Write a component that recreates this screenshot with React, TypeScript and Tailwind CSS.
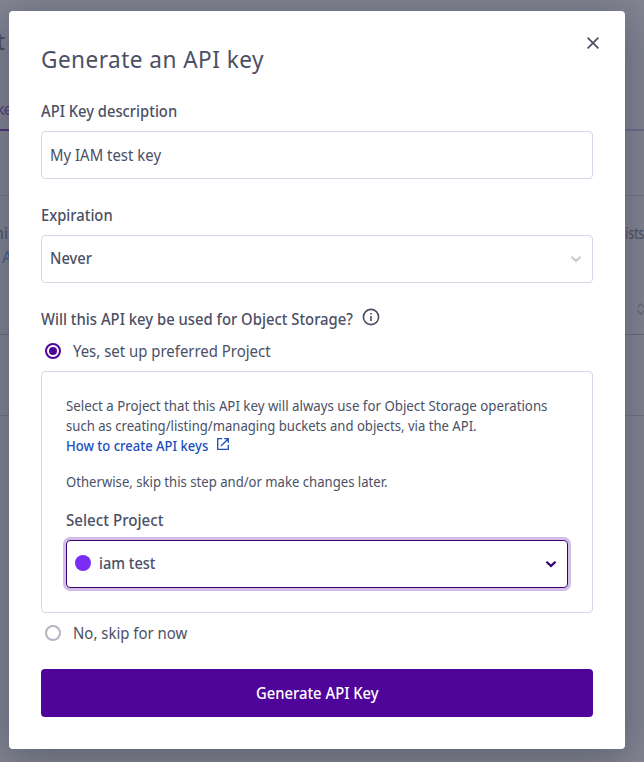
import type { ReactNode } from "react";

const LABEL = "block w-fit origin-left scale-x-[0.922] text-[16px] leading-5 font-medium whitespace-nowrap";
const TEXT = "block w-fit origin-left scale-x-[0.933] whitespace-nowrap";

function Field({ label, children }: { label: string; children: ReactNode }) {
  return (
    <div className="mb-[26px]">
      <span className={LABEL}>{label}</span>
      <div className="mt-[10px] flex h-12 items-center rounded border border-[#d4d8e7] px-2 leading-6">{children}</div>
    </div>
  );
}

function Chevron({ className }: { className: string }) {
  return (
    <svg className={className} width="12" height="8" viewBox="0 0 12 8" fill="none" stroke="currentColor" strokeWidth="2.2">
      <path d="M1.4 1.7 6 5.9 10.6 1.7" />
    </svg>
  );
}

function Radio({ checked, label }: { checked: boolean; label: string }) {
  return (
    <div className="flex h-5 items-center pl-1">
      <span
        className={
          checked
            ? "flex size-4 items-center justify-center rounded-full border-2 border-[#4f0599]"
            : "size-4 rounded-full border-2 border-[#b2b6c3]"
        }
      >
        {checked && <span className="size-2 rounded-full bg-[#4f0599]" />}
      </span>
      <span className={`ml-3 ${TEXT}`}>{label}</span>
    </div>
  );
}

function PageBehind() {
  return (
    <div className="absolute inset-0 flex flex-col bg-[#858793] text-[#484c61]">
      <div className="h-[98px] pt-[25px] text-[24px] leading-8 font-medium">
        <span className="-ml-[4px]">t</span>
      </div>
      <div className="flex h-[33px] border-b-2 border-[#6c6e8b]">
        <span className="-mb-[2px] h-[33px] w-[60px] border-b-2 border-[#4b2c78] text-[16px] leading-[22px] text-[#51387c]">
          <span className="-ml-[4px] tracking-[-1px]">ke</span>
        </span>
      </div>
      <div className="h-[65px] border-b border-[#757784]" />
      <div className="h-[139px] border-b border-[#696c7c] pt-[25px]">
        <div className="flex justify-between leading-6">
          <span className="-ml-[6px]">ni</span>
          <span className="origin-right scale-x-[0.75]">ists</span>
        </div>
        <div className="pl-[2px] leading-6 text-[#405b94]">A</div>
        <svg className="mt-[33px] ml-auto -mr-[2px]" width="10" height="14" viewBox="0 0 10 14" fill="none" stroke="#666977" strokeWidth="1.3">
          <path d="M1.5 5.5 5 2 8.5 5.5M1.5 8.5 5 12 8.5 8.5" />
        </svg>
      </div>
      <div className="h-[81px] border-b border-[#737582]" />
    </div>
  );
}

export default function App() {
  return (
    <div className="relative h-[762px] w-[644px] overflow-hidden font-['Noto_Sans','Open_Sans',sans-serif] text-[16px] text-[#4b5066]">
      <PageBehind />
      <main className="relative mt-[11px] ml-[9px] h-[738px] w-[616px] rounded bg-white px-8 pt-8 shadow-[0_8px_40px_6px_rgba(60,63,84,0.5)]">
        <header className="flex h-[58px] items-start justify-between">
          <h1 className="origin-left scale-x-[0.94] text-[24px] leading-8 tracking-[0.5px] whitespace-nowrap">Generate an API key</h1>
          <svg className="-mt-[6px] mr-[-6px]" width="12" height="12" viewBox="0 0 12 12" fill="none" stroke="currentColor" strokeWidth="1.7">
            <path d="m.6.6 10.8 10.8m0-10.8L.6 11.4" />
          </svg>
        </header>

        <Field label="API Key description">
          <span className={TEXT}>My IAM test key</span>
        </Field>
        <Field label="Expiration">
          <span className="-mt-[2px] origin-left scale-x-[0.92] font-medium">Never</span>
          <Chevron className="mr-[2px] ml-auto text-[#cccccc]" />
        </Field>

        <div className="flex h-5 items-center">
          <div className="w-[312px]">
            <span className="block w-fit origin-left scale-x-[0.927] leading-5 font-medium whitespace-nowrap">
              Will this API key be used for Object Storage?
            </span>
          </div>
          <svg className="-mt-1 ml-[9px]" width="18" height="18" viewBox="0 0 18 18" fill="none" stroke="currentColor" strokeWidth="1.6">
            <circle cx="9" cy="9" r="7.6" />
            <path d="M9 8v5M9 5v1.6" />
          </svg>
        </div>
        <div className="mt-3">
          <Radio checked label="Yes, set up preferred Project" />
        </div>

        <section className="mt-[10px] h-[242px] rounded border border-[#d4d8e7] px-6 pt-6">
          <p className="text-[14px] leading-5 whitespace-nowrap">
            <span className="block w-fit origin-left scale-x-[0.948]">
              Select a Project that this API key will always use for Object Storage operations
            </span>
            <span className="block w-fit origin-left scale-x-[0.936]">
              such as creating/listing/managing buckets and objects, via the API.
            </span>
          </p>
          <div className="flex h-5 items-center text-[14px] font-medium text-[#1b4dbf]">
            <div className="w-[142px]">
              <span className="-mt-px block w-fit origin-left scale-x-[0.93] leading-5 whitespace-nowrap">How to create API keys</span>
            </div>
            <svg className="-mt-1 ml-[9px]" width="12" height="12" viewBox="0 0 12 12" fill="none" stroke="currentColor" strokeWidth="1.3">
              <path d="M5.2.7H.7v10.6h10.6V6.8M7.3.7h4v4M11.3.7 4 8" />
            </svg>
          </div>
          <p className="mt-4 w-fit origin-left scale-x-[0.937] text-[14px] leading-5 whitespace-nowrap">
            Otherwise, skip this step and/or make changes later.
          </p>
          <div className="mt-[18px]">
            <span className="block w-fit origin-left scale-x-[0.945] leading-5 font-medium whitespace-nowrap">Select Project</span>
          </div>
          <div className="mt-[10px] flex h-12 w-[502px] items-center rounded border border-[#3b0073] px-2 pb-[2px] font-medium ring-3 ring-[#d2bfe5]">
            <span className="mr-2 size-4 rounded-full bg-[#792df5]" />
            <span className="origin-left scale-x-[0.91]">iam test</span>
            <Chevron className="mt-[2px] mr-[2px] ml-auto text-[#3b0073]" />
          </div>
        </section>

        <div className="mt-[10px]">
          <Radio checked={false} label="No, skip for now" />
        </div>
        <button className="mt-[26px] flex h-12 w-full items-center justify-center rounded bg-[#4f0599] font-medium text-white">
          <span className="scale-x-[0.925]">Generate API Key</span>
        </button>
      </main>
    </div>
  );
}
